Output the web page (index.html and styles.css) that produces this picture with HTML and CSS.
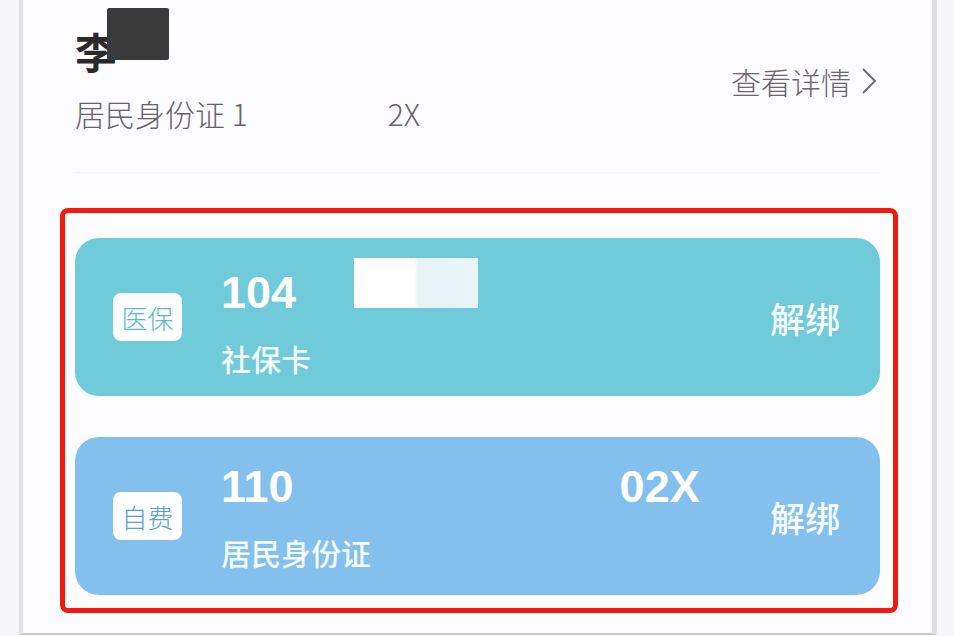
FILE: index.html
```html
<!DOCTYPE html>
<html lang="zh-CN">
<head>
<meta charset="utf-8">
<title>就诊卡</title>
<link rel="stylesheet" href="styles.css">
</head>
<body>
<div class="screen">
  <div class="panel">
    <header class="head">
      <div class="who">
        <div class="name"><span class="name-char">李</span><span class="mask-dark"></span></div>
        <div class="idline">居民身份证 1<span class="gap"></span>2X</div>
      </div>
      <a class="detail">查看详情<svg class="chev" width="16" height="28" viewBox="0 0 16 28"><polyline points="2,2 14,14 2,26" fill="none" stroke="#6b6474" stroke-width="1.8"/></svg></a>
    </header>
    <div class="divider"></div>
    <section class="highlight">
      <div class="mcard teal">
        <span class="badge badge-teal">医保</span>
        <div class="info">
          <div class="num"><span>104</span><span class="mask-light"></span></div>
          <div class="sub">社保卡</div>
        </div>
        <span class="unbind">解绑</span>
      </div>
      <div class="mcard blue">
        <span class="badge badge-blue">自费</span>
        <div class="info">
          <div class="num"><span>110</span><span class="tail">02X</span></div>
          <div class="sub">居民身份证</div>
        </div>
        <span class="unbind">解绑</span>
      </div>
    </section>
  </div>
</div>
</body>
</html>
```
FILE: styles.css
```css
* { box-sizing: border-box; }
html, body { margin: 0; padding: 0; }
body {
  background: #f7f7f9;
  font-family: "Noto Sans CJK SC", "Noto Sans", sans-serif;
}
.screen {
  width: 954px;
  height: 636px;
  display: flex;
  background: #f7f7f9;
  overflow: hidden;
}
.panel {
  margin-left: 19px;
  width: 918px;
  height: 635px;
  background: #fcfcfe;
  border-left: 4px solid #e0e0e5;
  border-right: 5px solid #dfdfe4;
  border-bottom: 2px solid #c9c9cd;
}
.head {
  height: 172px;
  padding: 8px 55px 0 52px;
  display: flex;
  justify-content: space-between;
  align-items: flex-start;
}
.name {
  height: 62px;
  display: flex;
  align-items: flex-start;
}
.name-char {
  font-size: 42px;
  line-height: 1;
  margin-top: 22px;
  color: #2a2a2a;
  font-weight: 700;
}
.mask-dark {
  display: inline-block;
  width: 62px;
  height: 52px;
  margin-left: -10px;
  background: #3a3a3a;
  border-radius: 2px;
}
.idline {
  margin-top: 25px;
  font-size: 30px;
  line-height: 36px;
  color: #67606f;
  font-weight: 300;
  display: flex;
  align-items: baseline;
}
.gap { display: inline-block; width: 140px; }
.detail {
  margin-top: 55px;
  font-size: 30px;
  line-height: 36px;
  color: #6b6474;
  font-weight: 300;
  display: flex;
  align-items: center;
  gap: 10px;
}
.chev { display: block; }
.divider {
  height: 1px;
  margin: 0 52px;
  background: #f4f4f8;
}
.highlight {
  margin: 35px 0 0 37px;
  width: 838px;
  border: 5px solid #f2190e;
  border-radius: 8px;
  padding: 25px 13px 13px 10px;
  display: flex;
  flex-direction: column;
  gap: 41px;
  background: #fdfdff;
}
.mcard {
  height: 158px;
  border-radius: 24px;
  display: flex;
  align-items: center;
  padding: 0 40px 0 38px;
  color: #fff;
}
.teal { background: #6fcad9; }
.blue { background: #84c0ee; }
.badge {
  width: 69px;
  height: 48px;
  border-radius: 8px;
  background: #fbfdfe;
  font-size: 26px;
  font-weight: 300;
  display: flex;
  align-items: center;
  justify-content: center;
  flex-shrink: 0;
}
.badge-teal { color: #63b6cb; }
.badge-blue { color: #5b9fd6; }
.info {
  margin-left: 39px;
  flex: 1;
  display: flex;
  flex-direction: column;
}
.num {
  font-family: "Liberation Sans", Arial, sans-serif;
  font-weight: 700;
  font-size: 45px;
  line-height: 48px;
  display: flex;
  align-items: flex-end;
}
.mask-light {
  display: inline-block;
  width: 124px;
  height: 50px;
  margin-left: 58px;
  margin-bottom: 9px;
  background: linear-gradient(90deg, #ffffff 0%, #ffffff 48%, #e6f4f7 52%, #e9f5f8 100%);
}
.tail { margin-left: 326px; }
.sub {
  margin-top: 23px;
  font-size: 30px;
  line-height: 36px;
  font-weight: 500;
  color: #f4fbfd;
}
.unbind {
  font-size: 35px;
  font-weight: 500;
  color: #f5fbfd;
  flex-shrink: 0;
}
```
